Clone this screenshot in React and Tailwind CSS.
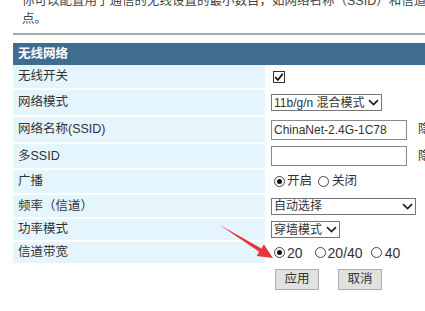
import React from 'react';

const Chevron = () => (
  <svg width="11" height="7" viewBox="0 0 11 7" className="shrink-0">
    <path d="M1 1.2 L5.5 5.6 L10 1.2" fill="none" stroke="#222" strokeWidth="1.7" />
  </svg>
);

const Radio = ({ checked }) => (
  <span className="w-[11px] h-[11px] rounded-full border border-[#444] bg-white flex items-center justify-center shrink-0">
    {checked && <span className="w-[5px] h-[5px] rounded-full bg-[#111]" />}
  </span>
);

const Select = ({ width, children }) => (
  <div className={`${width} h-[17px] border border-[#767676] bg-white flex items-center justify-between gap-[3px] pl-[2px] pr-[2px] leading-none text-[12px] whitespace-nowrap overflow-hidden`}>
    <span>{children}</span>
    <Chevron />
  </div>
);

const Input = ({ value }) => (
  <div className="w-[136px] h-[20px] border border-[#8a8a8a] bg-white flex items-center pl-[2px] text-[12px] leading-none shrink-0">
    {value}
  </div>
);

const Row = ({ label, height, first, children }) => (
  <div className={`flex ${height} ${first ? '' : 'mt-[2px]'}`}>
    <div className="w-[252px] bg-[#e5f5fd] pl-[5px] flex items-center">{label}</div>
    <div className="flex-1 bg-white pl-[6px] flex items-center">{children}</div>
  </div>
);

export default function App() {
  return (
    <div className="w-[425px] h-[311px] overflow-hidden bg-white relative text-[12.5px] text-[#333] font-['Liberation_Sans','Noto_Sans_CJK_SC',sans-serif]">
      {/* intro text, first line cut by the crop */}
      <div className="pl-[22px] mt-[-8px] leading-[18px] text-[#444]">
        <div className="whitespace-nowrap">你可以配置用于通信的无线设置的最小数目，如网络名称（SSID）和信道</div>
        <div>点。</div>
      </div>

      <div className="ml-[13px] mt-[5px] h-[2px] bg-[#a8a8a8]" />

      <div className="ml-[13px] mt-[8px] w-[430px]">
        <div className="h-[22px] bg-[#3e6d91] text-white font-bold pl-[5px] flex items-center">无线网络</div>

        <Row label="无线开关" height="h-[23px]" first>
          <span className="ml-[2px] w-[12px] h-[12px] border border-[#333] bg-white flex items-center justify-center">
            <svg width="10" height="10" viewBox="0 0 10 10">
              <path d="M1.2 5.2 L3.9 8 L8.8 1.8" fill="none" stroke="#111" strokeWidth="1.8" />
            </svg>
          </span>
        </Row>

        <Row label="网络模式" height="h-[25px]">
          <Select width="w-[111px]">11b/g/n 混合模式</Select>
        </Row>

        <Row label="网络名称(SSID)" height="h-[25px]">
          <Input value="ChinaNet-2.4G-1C78" />
          <span className="ml-[11px] whitespace-nowrap">隐藏</span>
        </Row>

        <Row label="多SSID" height="h-[24px]">
          <Input value="" />
          <span className="ml-[11px] whitespace-nowrap">隐藏</span>
        </Row>

        <Row label="广播" height="h-[23px]">
          <div className="ml-[3px] flex items-center">
            <Radio checked />
            <span className="ml-[2px]">开启</span>
            <span className="ml-[6px]"><Radio /></span>
            <span className="ml-[3px]">关闭</span>
          </div>
        </Row>

        <Row label="频率（信道）" height="h-[22px]">
          <Select width="w-[145px]">自动选择</Select>
        </Row>

        <Row label="功率模式" height="h-[21px]">
          <Select width="w-[69px]">穿墙模式</Select>
        </Row>

        <Row label="信道带宽" height="h-[21px]">
          <div className="ml-[3px] flex items-center text-[14px] leading-none">
            <Radio checked />
            <span className="ml-[2px]">20</span>
            <span className="ml-[12px]"><Radio /></span>
            <span className="ml-[2px]">20/40</span>
            <span className="ml-[8px]"><Radio /></span>
            <span className="ml-[3px]">40</span>
          </div>
        </Row>
      </div>

      <div className="mt-[6px] pl-[275px] flex gap-[19px]">
        <button className="w-[44px] h-[21px] bg-[#e1e1e1] border border-[#adadad] text-[#333] leading-none">应用</button>
        <button className="w-[44px] h-[21px] bg-[#e1e1e1] border border-[#adadad] text-[#333] leading-none">取消</button>
      </div>

      {/* red annotation arrow */}
      <svg className="absolute left-0 top-0 pointer-events-none" width="425" height="311" viewBox="0 0 425 311">
        <polygon
          points="219,224.5 261.4,248.4 263.9,244.4 273,258 256.7,255.9 259.2,251.8"
          fill="#e8343a"
        />
      </svg>
    </div>
  );
}
